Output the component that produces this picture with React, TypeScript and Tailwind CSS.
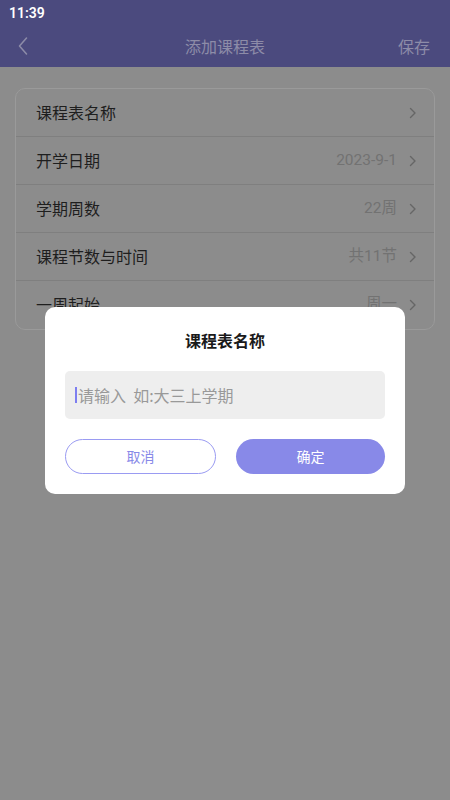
import React from "react";

const rows: { label: string; value: string }[] = [
  { label: "课程表名称", value: "" },
  { label: "开学日期", value: "2023-9-1" },
  { label: "学期周数", value: "22周" },
  { label: "课程节数与时间", value: "共11节" },
  { label: "一周起始", value: "周一" },
];

function Chevron({ className }: { className?: string }) {
  return (
    <svg width="8" height="12" viewBox="0 0 8 12" className={className} fill="none">
      <path d="M1.5 1.5 L6 6 L1.5 10.5" stroke="currentColor" strokeWidth="1.4" strokeLinecap="round" strokeLinejoin="round" />
    </svg>
  );
}

export default function App() {
  return (
    <div
      className="relative w-[450px] h-[800px] bg-[#8c8c8c] overflow-hidden"
      style={{ fontFamily: '"Noto Sans CJK SC", Roboto, "Noto Sans", sans-serif' }}
    >
      <div className="bg-[#4b4a7e] h-[67px] flex flex-col">
        <div className="h-[26px] flex items-center pl-[9px]">
          <span className="text-white text-[14px] font-semibold" style={{ fontFamily: 'Roboto, sans-serif' }}>11:39</span>
        </div>
        <div className="flex-1 flex items-center justify-between px-[18px] pb-[2px] relative">
          <svg width="10" height="18" viewBox="0 0 10 18" fill="none" className="text-[#8d8ca8]">
            <path d="M8.5 1 L1.5 9 L8.5 17" stroke="currentColor" strokeWidth="1.5" strokeLinecap="round" strokeLinejoin="round" />
          </svg>
          <span className="text-[16px] text-[#8d8ca8] absolute left-1/2 -translate-x-1/2">添加课程表</span>
          <span className="text-[16px] text-[#8d8ca8] mr-[2px]">保存</span>
        </div>
      </div>

      <div className="px-[15px] pt-[21px]">
        <div className="rounded-[10px] border border-[#9a9a9a] bg-[#8c8c8c] overflow-hidden">
          {rows.map((r, i) => (
            <div
              key={r.label}
              className={`h-[48px] flex items-center pl-[20px] pr-[17px] ${i < rows.length - 1 ? "border-b border-[#7f7f7f]" : ""}`}
            >
              <span className="text-[16px] text-[#1e1e1e] flex-1 pb-[2px]">{r.label}</span>
              {r.value && (
                <span className="text-[15.5px] text-[#727272] mr-[12px]" style={{ fontFamily: 'Roboto, "Noto Sans CJK SC", sans-serif' }}>
                  {r.value}
                </span>
              )}
              <Chevron className="text-[#666666]" />
            </div>
          ))}
        </div>
      </div>

      <div className="fixed inset-0 flex items-center justify-center">
        <div className="w-[360px] h-[187px] bg-white rounded-[10px] px-[20px] pt-[21px] flex flex-col">
          <div className="text-center text-[16px] font-bold text-[#1a1a1a] leading-[24px]">课程表名称</div>
          <div className="mt-[19px] h-[48px] bg-[#eeeeee] rounded-[5px] flex items-center pl-[10px]">
            <span className="w-[2px] h-[16px] bg-[#7d7ef0] mr-[1px]"></span>
            <span className="text-[16px] text-[#999999] whitespace-pre">请输入  如:大三上学期</span>
          </div>
          <div className="mt-[20px] flex gap-[20px]">
            <div className="flex-1 h-[35px] rounded-full border border-[#9a9bf2] flex items-center justify-center text-[14px] text-[#8889e8]">
              取消
            </div>
            <div className="flex-1 h-[35px] rounded-full bg-[#8889e8] flex items-center justify-center text-[14px] text-white">
              确定
            </div>
          </div>
        </div>
      </div>
    </div>
  );
}
